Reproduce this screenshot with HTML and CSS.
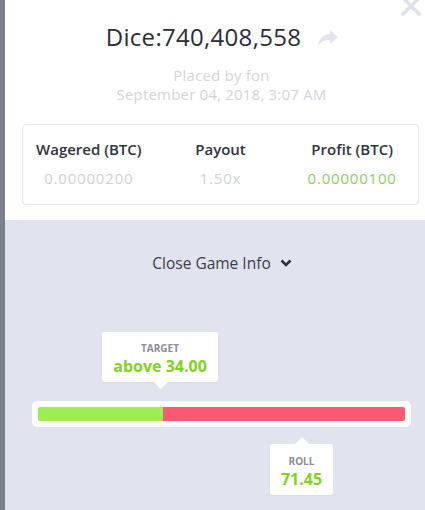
FILE: index.html
```html
<!DOCTYPE html>
<html lang="en">
<head>
    <meta charset="UTF-8">
    <meta name="viewport" content="width=device-width, initial-scale=1.0">
    <title>Bet Details</title>
    <link rel="stylesheet" href="styles.css">
</head>
<body>
    <div class="modal">
        <button class="close-btn" aria-label="Close">
            <svg width="22" height="22" viewBox="0 0 22 22">
                <path d="M3 -2 L19 14 M19 -2 L3 14" stroke="#dfe1ee" stroke-width="3.5" stroke-linecap="square"/>
            </svg>
        </button>
        <div class="bet-header">
            <div class="title-row">
                <h1>Dice:740,408,558</h1>
                <svg class="share-icon" width="22" height="18" viewBox="0 0 22 18">
                    <path d="M13 1 L21 8 L13 15 L13 11 C7 11 3.5 12.5 1 17 C1.8 10 5.5 5.5 13 5 Z" fill="#e2e4f0"/>
                </svg>
            </div>
            <div class="placed">Placed by fon</div>
            <div class="placed">September 04, 2018, 3:07 AM</div>

            <div class="stats-card">
                <div class="stat">
                    <div class="stat-label">Wagered (BTC)</div>
                    <div class="stat-value">0.00000200</div>
                </div>
                <div class="stat">
                    <div class="stat-label">Payout</div>
                    <div class="stat-value">1.50x</div>
                </div>
                <div class="stat">
                    <div class="stat-label">Profit (BTC)</div>
                    <div class="stat-value win">0.00000100</div>
                </div>
            </div>
        </div>

        <div class="game-info">
            <div class="toggle">
                Close Game Info
                <svg width="12" height="8" viewBox="0 0 12 8">
                    <path d="M1.5 1.5 L6 6 L10.5 1.5" stroke="#2d303b" stroke-width="2.6" fill="none"/>
                </svg>
            </div>

            <div class="roll-area">
                <div class="tip tip-top" style="margin-left: 70px;">
                    <div class="tip-label">TARGET</div>
                    <div class="tip-value">above 34.00</div>
                </div>
                <div class="bar">
                    <div class="bar-lose-under" style="width: 34%;"></div>
                    <div class="bar-win"></div>
                </div>
                <div class="tip tip-bottom" style="margin-left: 238px;">
                    <div class="tip-label">ROLL</div>
                    <div class="tip-value">71.45</div>
                </div>
            </div>
        </div>
    </div>
</body>
</html>
```

FILE: styles.css
```css
body {
    margin: 0;
    background-color: #7b818b;
    font-family: "Open Sans", Arial, sans-serif;
    height: 510px;
    overflow: hidden;
}
.modal {
    position: relative;
    margin-left: 5px;
    height: 510px;
    display: flex;
    flex-direction: column;
    background-color: #e1e3ef;
}
.close-btn {
    position: absolute;
    top: 0;
    right: 3px;
    padding: 0;
    border: none;
    background: none;
    cursor: pointer;
}
.bet-header {
    background-color: #fff;
    height: 220px;
    padding: 21px 6px 0 17px;
    box-sizing: border-box;
}
.title-row {
    display: flex;
    justify-content: center;
    align-items: center;
    gap: 16px;
    padding-left: 4px;
}
h1 {
    margin: 0;
    font-size: 24px;
    font-weight: 400;
    letter-spacing: 0.3px;
    color: #2b2d38;
    line-height: 32px;
}
.share-icon {
    margin-top: 1px;
}
.placed {
    text-align: center;
    color: #d3d4da;
    font-size: 15px;
    letter-spacing: 0.2px;
    line-height: 19px;
    padding-left: 2px;
}
.title-row + .placed {
    margin-top: 13px;
}
.stats-card {
    margin-top: 20px;
    height: 81px;
    box-sizing: border-box;
    border: 1px solid #e1e3ef;
    border-radius: 4px;
    display: grid;
    grid-template-columns: repeat(3, 1fr);
    padding-top: 14px;
}
.stat {
    text-align: center;
}
.stat-label {
    font-size: 15px;
    font-weight: 600;
    color: #30333f;
    line-height: 20px;
}
.stat-value {
    font-size: 15px;
    letter-spacing: 0.8px;
    color: #d0d1d7;
    line-height: 20px;
    margin-top: 9px;
}
.stat-value.win {
    color: #8bd05a;
}
.game-info {
    flex: 1;
}
.toggle {
    margin-top: 32px;
    text-align: center;
    font-size: 15.5px;
    color: #3a3d49;
    display: flex;
    justify-content: center;
    align-items: center;
    gap: 9px;
    padding-left: 14px;
}
.roll-area {
    margin-top: 58px;
    padding: 0 14px 0 27px;
}
.tip {
    position: relative;
    display: inline-block;
    background-color: #fff;
    border-radius: 3px;
    text-align: center;
    box-shadow: 0 1px 2px rgba(0, 0, 0, 0.04);
}
.tip::after {
    content: "";
    position: absolute;
    left: 50%;
    margin-left: -7px;
    border: 7px solid transparent;
}
.tip-top {
    width: 116px;
    height: 50px;
    padding-top: 10px;
    box-sizing: border-box;
}
.tip-top::after {
    top: 100%;
    border-top-color: #fff;
    border-bottom: none;
    margin-left: -6px;
}
.tip-bottom {
    width: 63px;
    height: 51px;
    padding-top: 11px;
    box-sizing: border-box;
    margin-top: 17px;
}
.tip-bottom::after {
    bottom: 100%;
    border-bottom-color: #fff;
    border-top: none;
}
.tip-label {
    font-size: 10px;
    font-weight: 700;
    color: #8a8e9b;
    line-height: 12px;
}
.tip-value {
    font-size: 16px;
    font-weight: 700;
    color: #81d31b;
    line-height: 20px;
    margin-top: 2px;
}
.bar {
    margin-top: 19px;
    background-color: #fff;
    border-radius: 5px;
    height: 26px;
    padding: 6px;
    box-sizing: border-box;
    display: flex;
}
.bar-lose-under {
    background-color: #9ded53;
    border-radius: 2px 0 0 2px;
}
.bar-win {
    flex: 1;
    background-color: #fb5871;
    border-radius: 0 2px 2px 0;
}
```
